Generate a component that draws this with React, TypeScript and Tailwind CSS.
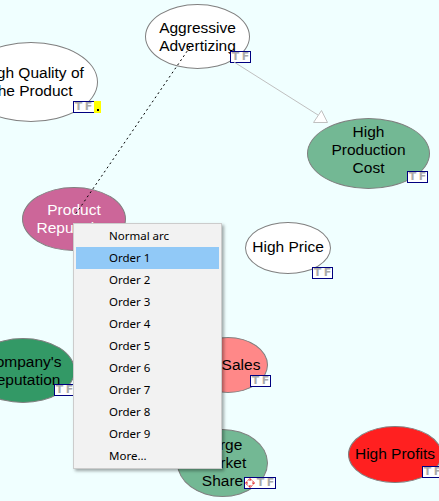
import React from 'react';

type Node = {
  lines: string[];
  x: number;
  y: number;
  w: number;
  h: number;
  fill: string;
  text?: string;
  shift?: string;
};

const nodes: Node[] = [
  { lines: ['Aggressive', 'Advertizing'], x: 145, y: 4, w: 105, h: 65, fill: 'bg-white' },
  { lines: ['High Quality of', 'the Product'], x: -36, y: 42, w: 134, h: 80, fill: 'bg-white', shift: 'ml-[4px]' },
  { lines: ['High', 'Production', 'Cost'], x: 307, y: 118, w: 123, h: 71, fill: 'bg-[#73b894]', shift: '-translate-y-[4px]' },
  { lines: ['Product', 'Reputation'], x: 22, y: 187, w: 104, h: 64, fill: 'bg-[#cc6699]', text: 'text-white' },
  { lines: ['High Price'], x: 245, y: 222, w: 86, h: 52, fill: 'bg-white', shift: '-translate-y-[1px]' },
  { lines: ["Company's", 'Reputation'], x: -29, y: 338, w: 104, h: 65, fill: 'bg-[#339966]' },
  { lines: ['Sales'], x: 188, y: 337, w: 80, h: 56, fill: 'bg-[#ff8888]', shift: 'ml-[26px]' },
  { lines: ['Large', 'Market', 'Share'], x: 177, y: 429, w: 91, h: 68, fill: 'bg-[#73b894]', shift: 'leading-[17px]' },
  { lines: ['High Profits'], x: 348, y: 426, w: 94, h: 57, fill: 'bg-[#ff2020]', shift: '-translate-y-[1px]' },
];

const Letter = ({ c }: { c: string }) => (
  <span className="w-[9px] flex items-center justify-center font-['DejaVu_Sans',sans-serif] text-[11px] leading-[10px] font-black text-[#aaaaaa]">
    {c}
  </span>
);

const Badge = ({ x, y, extra, pre }: { x: number; y: number; extra?: boolean; pre?: boolean }) => (
  <div
    className="absolute flex items-stretch gap-[1px] h-[12px] border border-[#000080] bg-white"
    style={{ left: x, top: y }}
  >
    {pre && (
      <svg width="10" height="10" viewBox="0 0 10 10">
        <circle cx="5" cy="5" r="3.5" fill="none" stroke="#e02020" strokeWidth="1" strokeDasharray="1.6 1.1" />
        <line x1="5" y1="0" x2="5" y2="3" stroke="#e02020" />
        <line x1="5" y1="7" x2="5" y2="10" stroke="#e02020" />
        <line x1="0" y1="5" x2="3" y2="5" stroke="#e02020" />
        <line x1="7" y1="5" x2="10" y2="5" stroke="#e02020" />
      </svg>
    )}
    <Letter c="T" />
    <Letter c="F" />
    {extra && (
      <span className="relative w-[7px] bg-[#ffff00] -my-[1px] -mr-[1px]">
        <span className="absolute left-[3px] bottom-[2px] w-[2px] h-[2px] bg-black" />
      </span>
    )}
  </div>
);

const menuItems = ['Normal arc', 'Order 1', 'Order 2', 'Order 3', 'Order 4', 'Order 5', 'Order 6', 'Order 7', 'Order 8', 'Order 9', 'More...'];

export default function App() {
  return (
    <div className="relative w-[439px] h-[501px] overflow-hidden bg-[#f0ffff] font-['Liberation_Sans',Arial,sans-serif]">
      {/* nodes */}
      {nodes.map((n) => (
        <div
          key={n.lines.join()}
          className={`absolute flex flex-col items-center justify-center rounded-[50%] border border-[#808080] ${n.fill} ${n.text ?? 'text-black'}`}
          style={{ left: n.x, top: n.y, width: n.w, height: n.h }}
        >
          {n.lines.map((l) => (
            <div key={l} className={`text-[15.5px] leading-[18px] whitespace-nowrap ${n.shift ?? ''}`}>
              {l}
            </div>
          ))}
        </div>
      ))}

      {/* badges */}
      <Badge x={230} y={51} />
      <Badge x={73} y={101} extra />
      <Badge x={407} y={171} />
      <Badge x={312} y={267} />
      <Badge x={54} y={384} />
      <Badge x={250} y={375} />
      <Badge x={244} y={477} pre />
      <Badge x={422} y={466} />

      {/* arcs */}
      <svg className="absolute left-0 top-0" width="439" height="501">
        <line x1="234" y1="62" x2="318" y2="115" stroke="#c0c0c0" strokeWidth="1" />
        <polygon points="313.5,122.5 321.5,110.5 327.5,122.5" fill="#ffffff" stroke="#c0c0c0" strokeWidth="1" />
        <line x1="190" y1="47" x2="75" y2="215" stroke="#000000" strokeWidth="1" strokeDasharray="2 3" />
      </svg>

      {/* context menu */}
      <div className="absolute left-[73px] top-[223px] w-[149px] border border-[#cccccc] bg-[#f2f2f2] py-[1px] shadow-[2px_2px_3px_rgba(0,0,0,0.35)] font-['Noto_Sans',sans-serif] text-[11.5px] text-black">
        {menuItems.map((item) => (
          <div
            key={item}
            className={`mx-[2px] h-[22px] flex items-center pl-[33px] ${item === 'Order 1' ? 'bg-[#91c9f7]' : ''}`}
          >
            {item}
          </div>
        ))}
      </div>
    </div>
  );
}
